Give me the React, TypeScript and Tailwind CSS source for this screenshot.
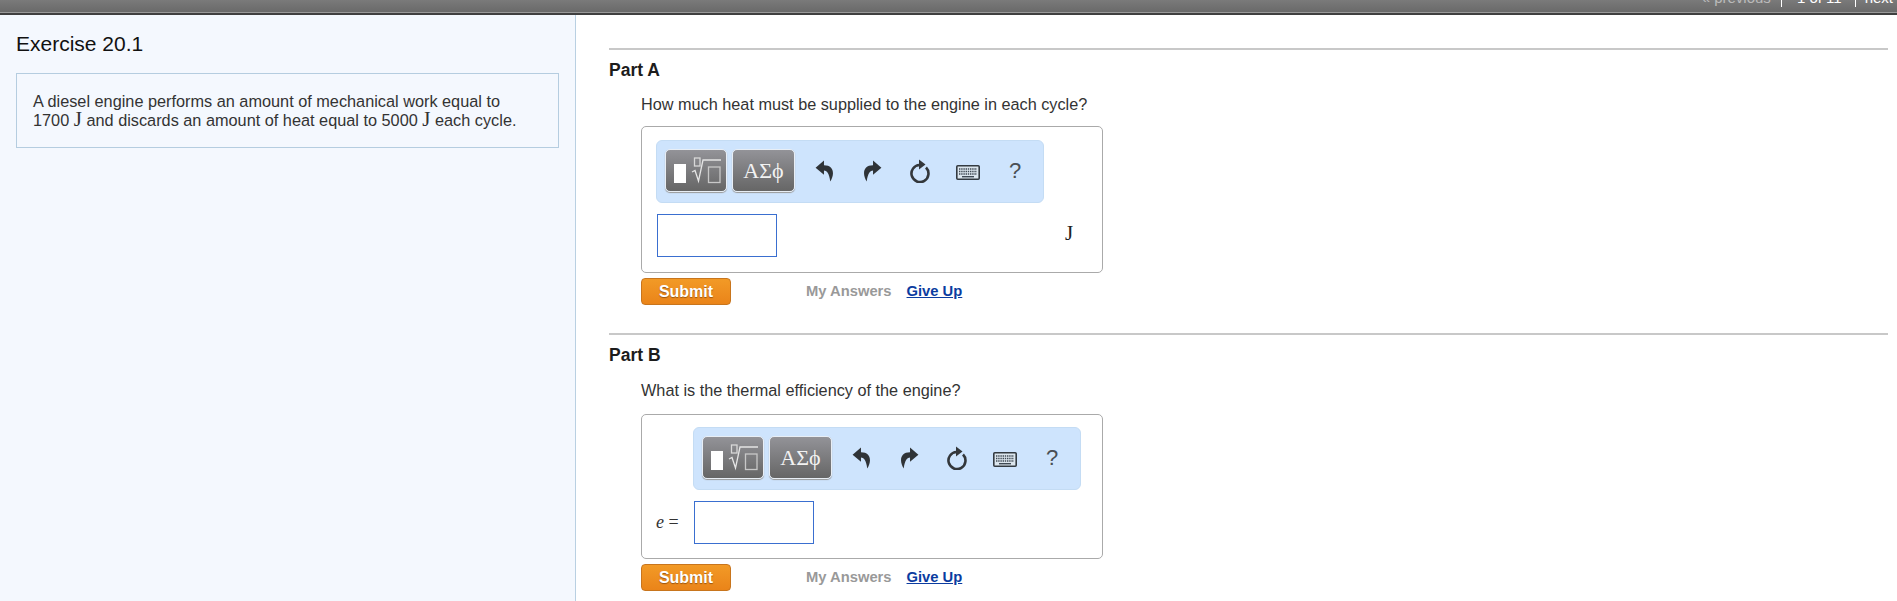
import React from "react";

const sans = "font-['Liberation_Sans',Arial,sans-serif]";
const serif = "font-['Liberation_Serif','Times_New_Roman',serif]";

const TemplatesIcon = () => (
	<svg width="60" height="41" viewBox="0 0 60 41" fill="none">
		<rect x="8" y="14" width="12" height="19" fill="#fff" />
		<rect x="28.5" y="8" width="5.5" height="8" stroke="#d8d8d8" strokeWidth="1.3" />
		<path d="M26 22 L29 20.5 L32.5 31 L37 10 H55" stroke="#e4e4e4" strokeWidth="1.3" />
		<rect x="42.5" y="17" width="11.5" height="15.5" stroke="#c8c8c8" strokeWidth="1.3" />
	</svg>
);

const UndoIcon = () => (
	<svg width="19" height="22" viewBox="0 0 18 21" fill="#2f3337">
		<path d="M8.5 0.5 L0.5 7.5 L8.5 14 V10 C11 10 13.5 12.5 14.5 20.5 C19 13.5 18 5 8.5 5 Z" />
	</svg>
);

const RedoIcon = () => (
	<svg width="19" height="22" viewBox="0 0 18 21" fill="#2f3337">
		<path d="M9.5 0.5 L17.5 7.5 L9.5 14 V10 C7 10 4.5 12.5 3.5 20.5 C-1 13.5 0 5 9.5 5 Z" />
	</svg>
);

const ResetIcon = () => (
	<svg width="22" height="24" viewBox="0 0 22 24" fill="none">
		<path d="M17 8.5 A8.5 8.5 0 1 1 10.5 6" stroke="#33373b" strokeWidth="2.6" />
		<path d="M10 0.5 L16.5 5.5 L10 10.5 Z" fill="#33373b" />
	</svg>
);

const KeyboardIcon = () => (
	<svg width="24" height="15" viewBox="0 0 24 15" fill="none">
		<rect x="0.8" y="0.8" width="22.4" height="13.4" rx="1" fill="#dce6ee" stroke="#333a41" strokeWidth="1.6" />
		<path d="M3 4 H21 M3 6.5 H21 M3 9 H21" stroke="#3f4953" strokeWidth="1.3" strokeDasharray="1.4 0.8" />
		<path d="M6 11.7 H18" stroke="#3f4953" strokeWidth="1.4" />
	</svg>
);

const Toolbar = () => (
	<div className="flex h-[63px] w-[388px] items-start rounded-md border border-[#c4dcf4] bg-[#cee4fd] pl-[8px] pt-[8px]">
		<div className="h-[43px] w-[62px] overflow-hidden rounded-[5px] border border-[#e8eef5] bg-gradient-to-b from-[#939398] to-[#666666] shadow-[0_1px_1px_#999]">
			<TemplatesIcon />
		</div>
		<div className={`ml-[5px] flex h-[43px] w-[63px] items-center justify-center rounded-[5px] border border-[#e8eef5] bg-gradient-to-b from-[#939398] to-[#666666] text-[22px] leading-none text-[#f2f2f2] shadow-[0_1px_1px_#999] ${serif}`}>
			ΑΣϕ
		</div>
		<div className="ml-[20px] flex h-[43px] items-center">
			<UndoIcon />
		</div>
		<div className="ml-[29px] flex h-[43px] items-center">
			<RedoIcon />
		</div>
		<div className="ml-[27px] flex h-[43px] items-center pt-[1px]">
			<ResetIcon />
		</div>
		<div className="ml-[25px] flex h-[43px] items-center pt-[3px]">
			<KeyboardIcon />
		</div>
		<div className={`ml-[29px] flex h-[43px] items-center text-[22px] text-[#4a4f55] ${sans}`}>?</div>
	</div>
);

type PartProps = {
	title: string;
	question: string;
	questionClass: string;
	boxClass: string;
	children: React.ReactNode;
};

const Part = ({ title, question, questionClass, boxClass, children }: PartProps) => (
	<section className="border-t-2 border-[#c8c8c8]">
		<h2 className="pt-[11px] text-[17.5px] leading-[19px] font-bold text-[#1c1c1c]">{title}</h2>
		<p className={`ml-[32px] text-[16.25px] leading-[19px] text-[#333] ${questionClass}`}>{question}</p>
		<div className={`ml-[32px] w-[462px] rounded-[5px] border border-[#aaa] bg-white ${boxClass}`}>
			{children}
		</div>
		<div className="ml-[32px] mt-[5px] flex h-[27px] items-center">
			<button className="h-[27px] w-[90px] rounded-[4px] border border-[#c8751d] bg-gradient-to-b from-[#f29a26] to-[#ea8419] text-[16px] font-bold text-white [text-shadow:0_1px_1px_#9a5510]">
				Submit
			</button>
			<span className="ml-[75px] text-[14.75px] font-bold text-[#999]">My Answers</span>
			<a className="ml-[15px] text-[14.75px] font-bold text-[#0b3ca0] underline">Give Up</a>
		</div>
	</section>
);

const App: React.FC = () => {
	return (
		<main className={`flex h-[601px] flex-col overflow-hidden bg-white ${sans}`}>
			{/* top bar, text is cut off at the window edge */}
			<div className="flex h-[15px] shrink-0 items-start justify-end overflow-hidden border-b-[2px] border-[#3f3f3f] bg-gradient-to-b from-[#7a7a7a] to-[#686868] pr-[4px] shadow-[inset_0_-1px_0_#999]">
				<div className="-mt-[11px] flex shrink-0 items-center text-[15px] leading-[18px] text-white">
					<span className="text-[#bbb]">« previous</span>
					<span className="ml-[10px] border-l border-white pl-[15px]">1 of 11</span>
					<span className="ml-[13px] border-l border-white pl-[9px]">next</span>
				</div>
			</div>

			<div className="flex min-h-0 flex-1">
				<aside className="w-[576px] shrink-0 border-r border-[#b9d0e2] bg-[#f4f8fe] pl-[16px]">
					<h1 className="pt-[17px] text-[21px] leading-[24px] text-[#111]">Exercise 20.1</h1>
					<div className="mt-[17px] h-[75px] w-[543px] border border-[#b5cde0] pl-[16px] pt-[17px] text-[16.3px] leading-[20px] text-[#333]">
						<p>A diesel engine performs an amount of mechanical work equal to</p>
						<p className="-mt-[2px]">
							1700 <span className={`${serif} text-[21px] leading-none`}>J</span> and discards an amount of heat equal to 5000{" "}
							<span className={`${serif} text-[21px] leading-none`}>J</span> each cycle.
						</p>
					</div>
				</aside>

				<div className="min-w-0 flex-1 pl-[33px] pr-[9px] pt-[33px]">
					<Part
						title="Part A"
						question="How much heat must be supplied to the engine in each cycle?"
						questionClass="pt-[15px]"
						boxClass="mt-[12px] h-[147px]"
					>
						<div className="pl-[14px] pt-[13px]">
							<Toolbar />
							<div className="mt-[11px] flex items-center pl-[1px]">
								<div className="h-[43px] w-[120px] border border-[#3a6fd0] bg-white" />
								<span className={`ml-[288px] pb-[4px] text-[21px] text-[#222] ${serif}`}>J</span>
							</div>
						</div>
					</Part>
					<div className="mt-[28px]">
						<Part
							title="Part B"
							question="What is the thermal efficiency of the engine?"
							questionClass="pt-[16px]"
							boxClass="mt-[14px] h-[145px]"
						>
							<div className="pl-[14px] pt-[12px]">
								<div className="pl-[37px]">
									<Toolbar />
								</div>
								<div className="mt-[11px] flex items-center">
									<span className={`w-[38px] text-[18px] text-[#333] ${serif}`}>
										<i>e</i> =
									</span>
									<div className="h-[43px] w-[120px] border border-[#3a6fd0] bg-white" />
								</div>
							</div>
						</Part>
					</div>
				</div>
			</div>
		</main>
	);
};

export default App;
